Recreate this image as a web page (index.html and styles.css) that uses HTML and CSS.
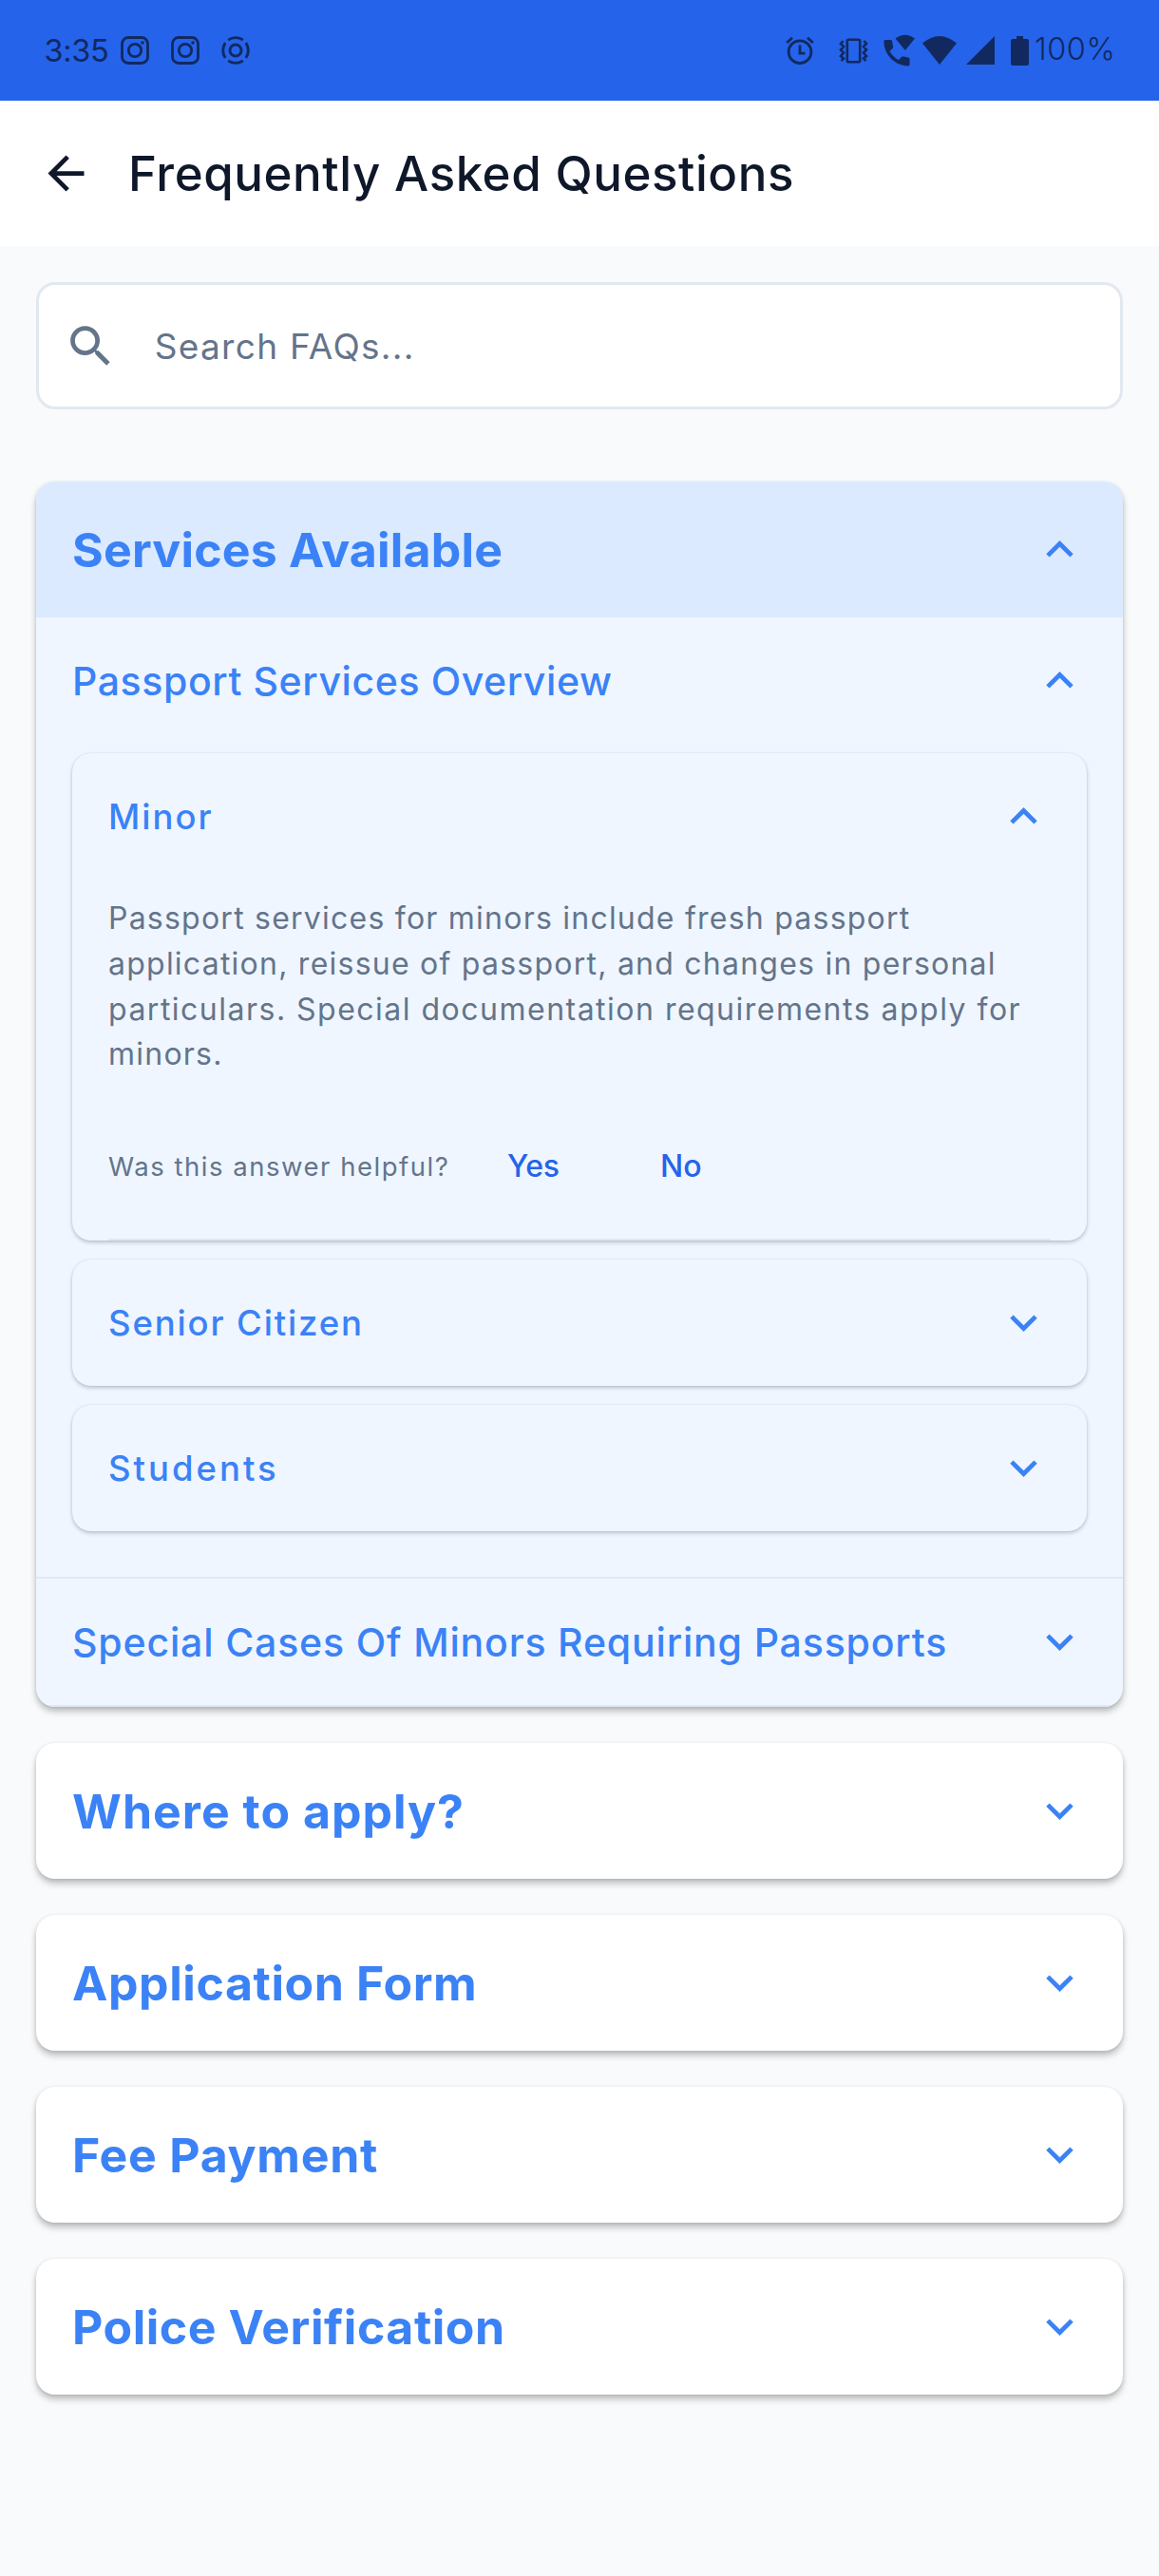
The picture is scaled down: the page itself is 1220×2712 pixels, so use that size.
FILE: index.html
```html
<!DOCTYPE html>
<html lang="en">
<head>
<meta charset="utf-8">
<title>Frequently Asked Questions</title>
<link rel="stylesheet" href="styles.css">
</head>
<body>
<svg class="defs" aria-hidden="true">
  <symbol id="down" viewBox="0 0 24 24"><path d="M16.59 8.59 12 13.17 7.41 8.59 6 10l6 6 6-6z"/></symbol>
  <symbol id="up" viewBox="0 0 24 24"><path d="m12 8-6 6 1.41 1.41L12 10.83l4.59 4.58L18 14z"/></symbol>
  <symbol id="insta" viewBox="0 0 30 30">
    <rect x="1.5" y="1.5" width="27" height="27" rx="6.5" fill="none" stroke="currentColor" stroke-width="2.8"/>
    <circle cx="15" cy="15" r="6.7" fill="none" stroke="currentColor" stroke-width="2.8"/>
    <circle cx="23" cy="7" r="1.8"/>
  </symbol>
</svg>

<div class="status">
  <div class="status-left">
    <span class="clock">3:35</span>
    <svg class="notif" viewBox="0 0 30 30"><use href="#insta"/></svg>
    <svg class="notif" viewBox="0 0 30 30"><use href="#insta"/></svg>
    <svg class="notif" viewBox="0 0 30 30" fill="none" stroke="currentColor" stroke-width="2.9">
      <circle cx="15" cy="15" r="6"/>
      <path d="M7.2 4.2A13.3 13.3 0 0 1 22.8 4.2M25.8 7.2A13.3 13.3 0 0 1 25.8 22.8M22.8 25.8A13.3 13.3 0 0 1 7.2 25.8M4.2 22.8A13.3 13.3 0 0 1 4.2 7.2"/>
    </svg>
  </div>
  <div class="status-right">
    <svg class="alarm" viewBox="0 0 30 30" fill="none" stroke="currentColor" stroke-width="2.8">
      <circle cx="15" cy="16.7" r="11.9"/>
      <path d="M15 9.5V18.200H20.500M1.200 7 7 1.700M28.800 7 23 1.700"/>
    </svg>
    <svg class="vibrate" viewBox="0 0 31 27" fill="none" stroke="currentColor" stroke-width="2.6">
      <rect x="8.800" y="1.800" width="13.400" height="23.400" rx="1.500"/>
      <path d="M4.500 3 2 6l3 3-3 3.500 3 3L2 19l3 2.500L2.500 24M26.500 3 29 6l-3 3 3 3.500-3 3 3 3.500-3 2.500 2.500 2.500"/>
    </svg>
    <svg class="wificall" viewBox="0 0 33 34">
      <path d="M12.500 4.500Q22.500-3.200 33 4.500L22.800 17zM2 6H7.500Q9 6 9.200 7.500 9.300 10.500 10.200 12.700 10.500 14 9.600 14.900L6.500 18Q10 24 15.800 27.200L18.800 24Q19.700 23.200 21 23.600 23.500 24.300 26 24.400 27.500 24.600 27.500 26V31.700Q27.500 33.500 25.800 33.500C12 33 .8 22 .3 7.800Q.3 6 2 6z"/>
    </svg>
    <svg class="wifi" viewBox="0 0 36 30"><path d="M0 7.500Q18-7.500 36 7.500L18 30z"/></svg>
    <svg class="signal" viewBox="0 0 30 30"><path d="M30 0V30H0z"/></svg>
    <svg class="battery" viewBox="0 0 19 31"><path d="M6 0H13V3H17Q19 3 19 5V29Q19 31 17 31H2Q0 31 0 29V5Q0 3 2 3H6z"/></svg>
    <span class="percent">100%</span>
  </div>
</div>

<header class="appbar">
  <svg class="icon" viewBox="0 0 24 24"><path d="M20 11H7.830l5.590-5.590L12 4l-8 8 8 8 1.410-1.410L7.830 13H20z"/></svg>
  <h1>Frequently Asked Questions</h1>
</header>

<main>
  <div class="search">
    <svg class="icon" viewBox="0 0 24 24"><path d="M15.500 14h-.79l-.28-.27A6.471 6.471 0 0 0 16 9.500 6.500 6.500 0 1 0 9.500 16c1.610 0 3.090-.59 4.230-1.570l.27.28v.79l5 4.990L20.490 19l-4.990-5zm-6 0C7.010 14 5 11.990 5 9.500S7.010 5 9.500 5 14 7.010 14 9.500 11.990 14 9.500 14z"/></svg>
    <span>Search FAQs...</span>
  </div>

  <section class="card services">
    <div class="card-head open"><h2 class="t-services">Services Available</h2><svg class="icon"><use href="#up"/></svg></div>
    <div class="topic">
      <div class="topic-head"><h3 class="t-overview">Passport Services Overview</h3><svg class="icon"><use href="#up"/></svg></div>
      <div class="entries">
        <article class="entry">
          <div class="entry-head"><h4 class="t-minor">Minor</h4><svg class="icon"><use href="#up"/></svg></div>
          <div class="answer">
            <p><span class="l1">Passport services for minors include fresh passport</span> <span class="l2">application, reissue of passport, and changes in personal</span> <span class="l3">particulars. Special documentation requirements apply for</span> <span class="l1">minors.</span></p>
            <div class="feedback"><span class="ask">Was this answer helpful?</span><b class="yes">Yes</b><b>No</b></div>
          </div>
        </article>
        <article class="entry"><div class="entry-head"><h4 class="t-senior">Senior Citizen</h4><svg class="icon"><use href="#down"/></svg></div></article>
        <article class="entry"><div class="entry-head"><h4 class="t-students">Students</h4><svg class="icon"><use href="#down"/></svg></div></article>
      </div>
    </div>
    <div class="topic">
      <div class="topic-head special"><h3 class="t-special">Special Cases Of Minors Requiring Passports</h3><svg class="icon"><use href="#down"/></svg></div>
    </div>
  </section>

  <section class="card"><div class="card-head"><h2 class="t-where">Where to apply?</h2><svg class="icon"><use href="#down"/></svg></div></section>
  <section class="card"><div class="card-head"><h2 class="t-form">Application Form</h2><svg class="icon"><use href="#down"/></svg></div></section>
  <section class="card"><div class="card-head"><h2 class="t-fee">Fee Payment</h2><svg class="icon"><use href="#down"/></svg></div></section>
  <section class="card"><div class="card-head"><h2 class="t-police">Police Verification</h2><svg class="icon"><use href="#down"/></svg></div></section>
</main>
</body>
</html>
```
FILE: styles.css
```css
* { box-sizing: border-box; }
html { background: #f8fafc; }
body {
  margin: 0;
  width: 1220px;
  height: 2712px;
  background: #f8fafc;
  color: #0f172a;
  font-family: Inter, "Liberation Sans", sans-serif;
  white-space: nowrap;
}
h1, h2, h3, h4, p { margin: 0; }
svg { display: block; flex: none; fill: currentColor; }
.defs { position: absolute; width: 0; height: 0; }
.icon { width: 57px; height: 57px; }

/* status bar */
.status {
  display: flex;
  justify-content: space-between;
  height: 106px;
  padding: 0 47px 0 46.500px;
  background: #2563eb;
  color: #12295f;
  font-size: 32.500px;
}
.status-left, .status-right { display: flex; align-items: center; }
.clock { width: 80px; letter-spacing: -.3px; }
.notif { width: 30px; height: 30px; margin-right: 23.200px; }
.status svg[fill="none"] { fill: none; }
.alarm { width: 30px; height: 30px; margin-right: 26.500px; }
.vibrate { width: 31px; height: 27px; margin-right: 15.500px; }
.wificall { width: 33px; height: 34px; margin-right: 8.500px; }
.wifi { width: 36px; height: 30px; margin-right: 10px; }
.signal { width: 30px; height: 30px; margin-right: 17px; }
.battery { width: 19px; height: 31px; margin-right: 6px; }
.percent { width: 84px; font-weight: 300; letter-spacing: .5px; line-height: 104px; align-self: flex-start; }

/* app bar */
.appbar {
  display: flex;
  align-items: center;
  gap: 37.500px;
  height: 153px;
  padding-left: 40.500px;
  background: #fff;
}
.appbar h1 { font-size: 51px; font-weight: 500; letter-spacing: .57px; }

main { padding: 38px 38px 0; }

.search {
  display: flex;
  align-items: center;
  gap: 39px;
  height: 134px;
  margin-bottom: 76px;
  padding-left: 25.750px;
  border: 3px solid #e2e8f0;
  border-radius: 20px;
  background: #fff;
  color: #64748b;
  font-size: 37px;
  letter-spacing: 1.300px;
}

/* accordion */
.card {
  margin-bottom: 38px;
  border-radius: 20px;
  background: #fff;
  color: #3b82f6;
  overflow: hidden;
  box-shadow: 0 5px 7px rgba(0, 0, 0, .23), 0 1px 4px rgba(0, 0, 0, .1);
}
.card-head, .topic-head, .entry-head {
  display: flex;
  align-items: center;
  justify-content: space-between;
  padding: 0 38px;
}
.card-head { height: 143px; }
.card-head.open { background: #dbeafe; }
.card-head h2 { font-size: 50px; font-weight: 700; }
.services { background: #eff6ff; }
.topic { border-bottom: 2px solid #e2e8f0; }
.topic-head { height: 133px; }
.topic-head h3 { font-size: 41px; font-weight: 500; }

.entries {
  display: flex;
  flex-direction: column;
  gap: 20px;
  padding: 10px 38px 48px;
}
.entry {
  border-radius: 20px;
  background: #eff6ff;
  box-shadow: 0 2px 4px rgba(0, 0, 0, .22), 0 0 2px rgba(0, 0, 0, .08);
}
.entry-head { height: 133px; }
.entry-head h4 { font-size: 36.500px; font-weight: 500; }

.answer {
  height: 380px;
  margin: 0 38px;
  padding-top: 17px;
  border-bottom: 2px solid #e2e8f0;
  color: #64748b;
}
.answer p { font-size: 32px; line-height: 47.800px; }
.answer p span { display: block; }
.feedback {
  display: flex;
  align-items: center;
  height: 60px;
  margin-top: 63.800px;
}
.ask { width: 420px; font-size: 27.500px; letter-spacing: 1.520px; }
.feedback b { color: #2563eb; font-size: 32px; font-weight: 500; }
.feedback .yes { width: 161px; letter-spacing: -.3px; }

/* tracking per label */
.t-services { letter-spacing: .2px; }
.t-overview { letter-spacing: .6px; }
.t-minor { letter-spacing: 2px; }
.t-senior { letter-spacing: 1.850px; }
.t-students { letter-spacing: 3px; }
.t-special { letter-spacing: .84px; }
.t-where { letter-spacing: 1px; }
.t-form { letter-spacing: .59px; }
.t-fee { letter-spacing: .71px; }
.t-police { letter-spacing: .53px; }
.l1 { letter-spacing: 1.230px; }
.l2 { letter-spacing: 1.240px; }
.l3 { letter-spacing: 1.490px; }
```
